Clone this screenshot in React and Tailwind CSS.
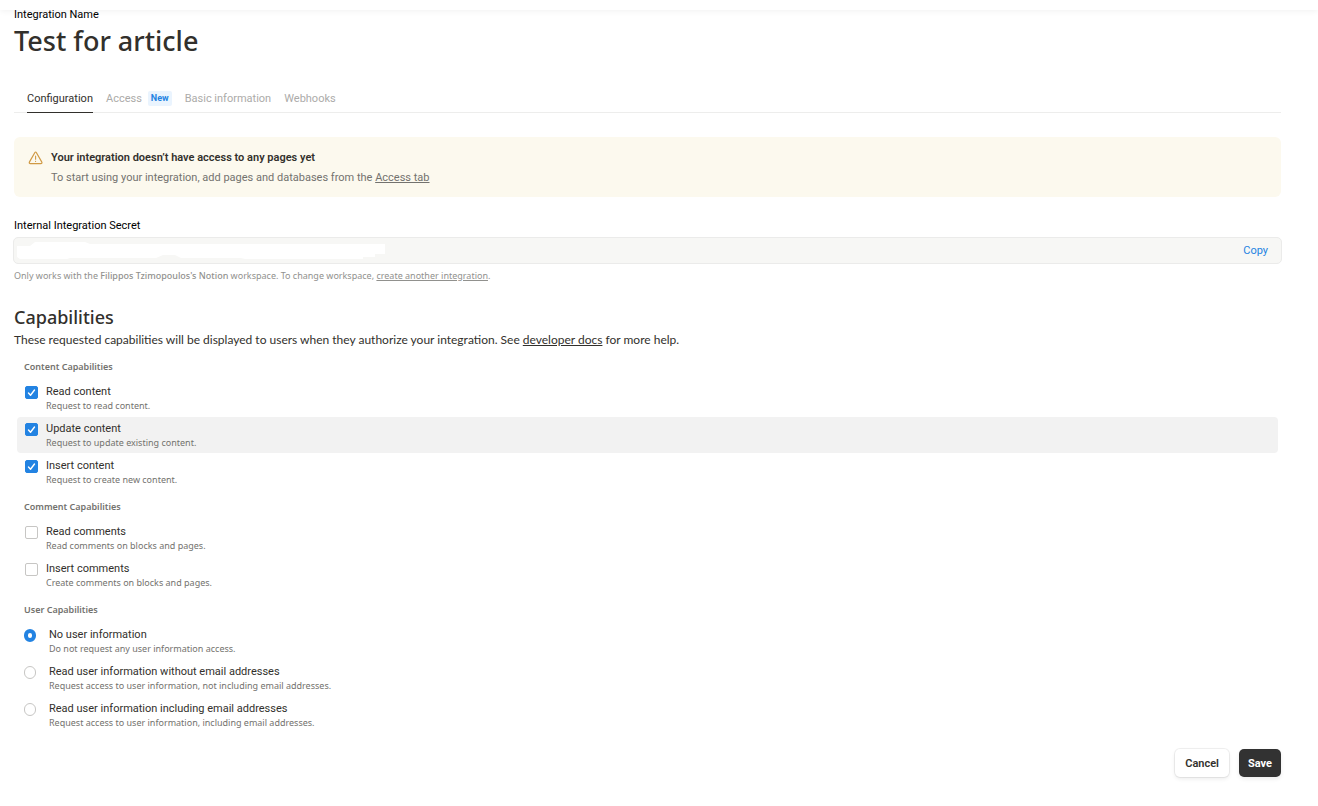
import { useState } from 'react';

const TABS = ['Configuration', 'Access', 'Basic information', 'Webhooks'];

const CONTENT_OPTIONS = [
  { id: 'read-content', label: 'Read content', hint: 'Request to read content.' },
  { id: 'update-content', label: 'Update content', hint: 'Request to update existing content.', active: true },
  { id: 'insert-content', label: 'Insert content', hint: 'Request to create new content.' },
];

const COMMENT_OPTIONS = [
  { id: 'read-comments', label: 'Read comments', hint: 'Read comments on blocks and pages.' },
  { id: 'insert-comments', label: 'Insert comments', hint: 'Create comments on blocks and pages.' },
];

const USER_OPTIONS = [
  { id: 'user-none', label: 'No user information', hint: 'Do not request any user information access.' },
  { id: 'user-basic', label: 'Read user information without email addresses', hint: 'Request access to user information, not including email addresses.' },
  { id: 'user-email', label: 'Read user information including email addresses', hint: 'Request access to user information, including email addresses.' },
];

function WarningIcon() {
  return (
    <svg className="w-4 h-4 shrink-0" viewBox="0 0 16 16" fill="none" stroke="#d09a45" strokeLinecap="round" strokeLinejoin="round" aria-hidden="true">
      <path strokeWidth={1.2} d="M6.900 2.500 1.500 11.900c-.6 1-.1 1.700.9 1.700h10.400c1 0 1.500-.7.9-1.700L8.300 2.500c-.4-.7-1-.7-1.400 0Z" />
      <path strokeWidth={1.1} d="M7.600 6v3.200M7.600 11.300v.1" />
    </svg>
  );
}

function CheckOption({ option, checked, onToggle }) {
  return (
    <label
      htmlFor={option.id}
      className={`flex gap-2 h-9 pl-2 rounded-sm cursor-pointer ${option.active ? 'bg-[#f2f2f2]' : ''}`}
    >
      <span className="relative mt-1.5 w-[13px] h-[13px] shrink-0">
        <input
          id={option.id}
          type="checkbox"
          checked={checked}
          onChange={onToggle}
          className="peer block appearance-none w-[13px] h-[13px] rounded-xs border border-[#c7c6c4] bg-white checked:bg-[#2383e2] checked:border-[#2383e2]"
        />
        <svg className="absolute inset-0 w-[13px] h-[13px] hidden peer-checked:block pointer-events-none" viewBox="0 0 13 13" fill="none" stroke="white" strokeWidth={1.4} strokeLinecap="round" strokeLinejoin="round">
          <path d="M3.500 7 5.500 9.200 9.500 4" />
        </svg>
      </span>
      <OptionText option={option} />
    </label>
  );
}

function RadioOption({ option, checked, onSelect }) {
  return (
    <label htmlFor={option.id} className="flex gap-[13px] h-9 pl-[7px] cursor-pointer">
      <input
        id={option.id}
        type="radio"
        name="user-capabilities"
        checked={checked}
        onChange={onSelect}
        className="appearance-none mt-1.5 w-3 h-[13px] shrink-0 rounded-full border border-[#c7c6c4] bg-white checked:border-4 checked:border-[#2383e2]"
      />
      <OptionText option={option} />
    </label>
  );
}

function OptionText({ option }) {
  return (
    <span className="block pt-[5px]">
      <span className="block text-[11px] leading-[14px] text-[#32302c]">{option.label}</span>
      <span className="block font-['Noto_Sans',sans-serif] text-[9px] leading-[13px] text-[#73726e]">{option.hint}</span>
    </span>
  );
}

function GroupTitle({ children }) {
  return <h3 className="pl-[7px] mb-1.5 font-['Noto_Sans',sans-serif] text-[9px] leading-[14px] font-semibold text-[#73726e]">{children}</h3>;
}

export default function App() {
  const [tab, setTab] = useState('Configuration');
  const [checked, setChecked] = useState(['read-content', 'update-content', 'insert-content']);
  const [userInfo, setUserInfo] = useState('user-none');

  const toggle = (id) =>
    setChecked((prev) => (prev.includes(id) ? prev.filter((item) => item !== id) : [...prev, id]));

  return (
    <div className="min-h-screen bg-white font-['Roboto',sans-serif] text-[#32302c]">
      <div className="h-2.5 bg-white shadow-[0_1px_6px_rgba(0,0,0,0.06)]"></div>

      <main className="pl-3.5 pr-[37px] pb-7">
        <p className="text-[11px] leading-[10px] text-black">Integration Name</p>
        <h1 className="mt-0.5 font-['Noto_Sans',sans-serif] text-[27px] leading-[38px] font-medium">Test for article</h1>

        <div role="tablist" className="flex gap-[13px] mt-[27px] pl-[13px] border-b border-[#ededec]">
          {TABS.map((name) => (
            <button
              key={name}
              type="button"
              role="tab"
              aria-selected={tab === name}
              onClick={() => setTab(name)}
              className={`flex items-center gap-1.5 h-[26px] -mb-px pb-0.5 text-[11px] leading-[14px] border-b ${
                tab === name ? 'border-[#32302c] text-[#32302c]' : 'border-transparent text-[#acaba9]'
              }`}
            >
              {name}
              {name === 'Access' && (
                <span className="px-[3px] rounded-xs bg-[#eaf4fe] text-[9px] leading-[15px] font-bold text-[#2383e2]">New</span>
              )}
            </button>
          ))}
        </div>

        <section className="flex gap-[7px] mt-6 pt-[11px] pb-[9px] pl-3.5 rounded-md bg-[#fcf9ee]">
          <span className="pt-0.5"><WarningIcon /></span>
          <div className="text-[11px] leading-5">
            <p className="font-semibold">Your integration doesn’t have access to any pages yet</p>
            <p className="text-[#73726e]">
              To start using your integration, add pages and databases from the <a href="#access" className="underline underline-offset-1">Access tab</a>
            </p>
          </div>
        </section>

        <label htmlFor="secret" className="block mt-[22px] text-[11px] leading-[14px] text-black">Internal Integration Secret</label>
        <div className="relative flex items-center -mx-px mt-1 h-[27px] pr-[13px] rounded-[5px] border border-[#ebebea] bg-[#f7f7f5]">
          <input id="secret" type="text" readOnly className="flex-1 min-w-0 h-full px-2 text-[11px] outline-none" />
          <svg className="absolute left-[3px] top-1 w-[370px] h-[18px] pointer-events-none" viewBox="0 0 370 18" fill="white" aria-hidden="true">
            <path d="M0 4h13l5-4h50l5 2h295v10h-10v3h-12v2H228l-4-1h-60l-6-3h-12l-7 3H53l-3 1H3l-3-2Z" />
          </svg>
          <button type="button" className="text-[11px] leading-[14px] text-[#2383e2]">Copy</button>
        </div>
        <p className="mt-1 font-['Noto_Sans',sans-serif] text-[9px] leading-[15px] text-[#91918e]">
          Only works with the <strong className="font-medium">Filippos Tzimopoulos's Notion</strong> workspace. To change workspace, <a href="#create" className="underline underline-offset-1">create another integration</a>.
        </p>

        <h2 className="mt-[22px] font-['Noto_Sans',sans-serif] text-[18px] leading-6 font-medium">Capabilities</h2>
        <p className="mt-0.5 font-['Lato',sans-serif] text-[12px] leading-[18px]">
          These requested capabilities will be displayed to users when they authorize your integration. See <a href="#docs" className="underline underline-offset-1">developer docs</a> for more help.
        </p>

        <div className="mt-[11px] px-[3px]">
          <GroupTitle>Content Capabilities</GroupTitle>
          <div className="flex flex-col gap-px">
            {CONTENT_OPTIONS.map((option) => (
              <CheckOption key={option.id} option={option} checked={checked.includes(option.id)} onToggle={() => toggle(option.id)} />
            ))}
          </div>
        </div>

        <div className="mt-2.5 px-[3px]">
          <GroupTitle>Comment Capabilities</GroupTitle>
          <div className="flex flex-col gap-px">
            {COMMENT_OPTIONS.map((option) => (
              <CheckOption key={option.id} option={option} checked={checked.includes(option.id)} onToggle={() => toggle(option.id)} />
            ))}
          </div>
        </div>

        <div className="mt-2.5 px-[3px]">
          <GroupTitle>User Capabilities</GroupTitle>
          <div className="flex flex-col gap-px">
            {USER_OPTIONS.map((option) => (
              <RadioOption key={option.id} option={option} checked={userInfo === option.id} onSelect={() => setUserInfo(option.id)} />
            ))}
          </div>
        </div>

        <div className="flex justify-end gap-2.5 mt-4">
          <button type="button" className="h-7 px-2.5 pt-0.5 rounded-[5px] bg-white text-[11px] font-semibold shadow-[0_0_0_1px_rgba(0,0,0,0.06),0_2px_4px_rgba(0,0,0,0.08)]">
            Cancel
          </button>
          <button type="button" className="h-7 px-[9px] pt-0.5 rounded-[5px] bg-[#323232] text-[11px] font-bold text-white shadow-[0_2px_4px_rgba(0,0,0,0.08)]">
            Save
          </button>
        </div>
      </main>
    </div>
  );
}
